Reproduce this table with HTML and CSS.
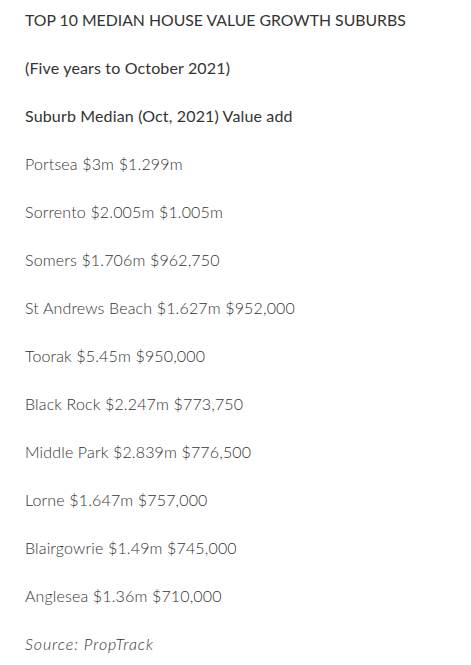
FILE: index.html
```html
<!DOCTYPE html>
<html>
<head>
<meta charset="utf-8">
<link rel="stylesheet" href="styles.css">
</head>
<body>
<div class="article">
  <p class="title">TOP 10 MEDIAN HOUSE VALUE GROWTH SUBURBS</p>
  <p class="head">(Five years to October 2021)</p>
  <p class="head">Suburb Median (Oct, 2021) Value add</p>
  <p>Portsea $3m $1.299m</p>
  <p>Sorrento $2.005m $1.005m</p>
  <p>Somers $1.706m $962,750</p>
  <p>St Andrews Beach $1.627m $952,000</p>
  <p>Toorak $5.45m $950,000</p>
  <p>Black Rock $2.247m $773,750</p>
  <p>Middle Park $2.839m $776,500</p>
  <p>Lorne $1.647m $757,000</p>
  <p>Blairgowrie $1.49m $745,000</p>
  <p>Anglesea $1.36m $710,000</p>
  <p class="source">Source: PropTrack</p>
</div>
</body>
</html>
```
FILE: styles.css
```css
html, body {
  margin: 0;
  padding: 0;
  background: #ffffff;
}
.article {
  padding: 8px 25px 0 25px;
  font-family: Lato, "Liberation Sans", sans-serif;
  font-size: 16px;
  line-height: 24px;
  color: #333333;
  font-weight: 300;
  letter-spacing: 0.15px;
}
.article p {
  margin: 0 0 24px 0;
}
.article .title {
  font-weight: 400;
  font-size: 15.8px;
  letter-spacing: 0;
}
.article .head {
  font-weight: 400;
  letter-spacing: 0.15px;
}
.article .source {
  font-style: italic;
  letter-spacing: 0.9px;
}
```
